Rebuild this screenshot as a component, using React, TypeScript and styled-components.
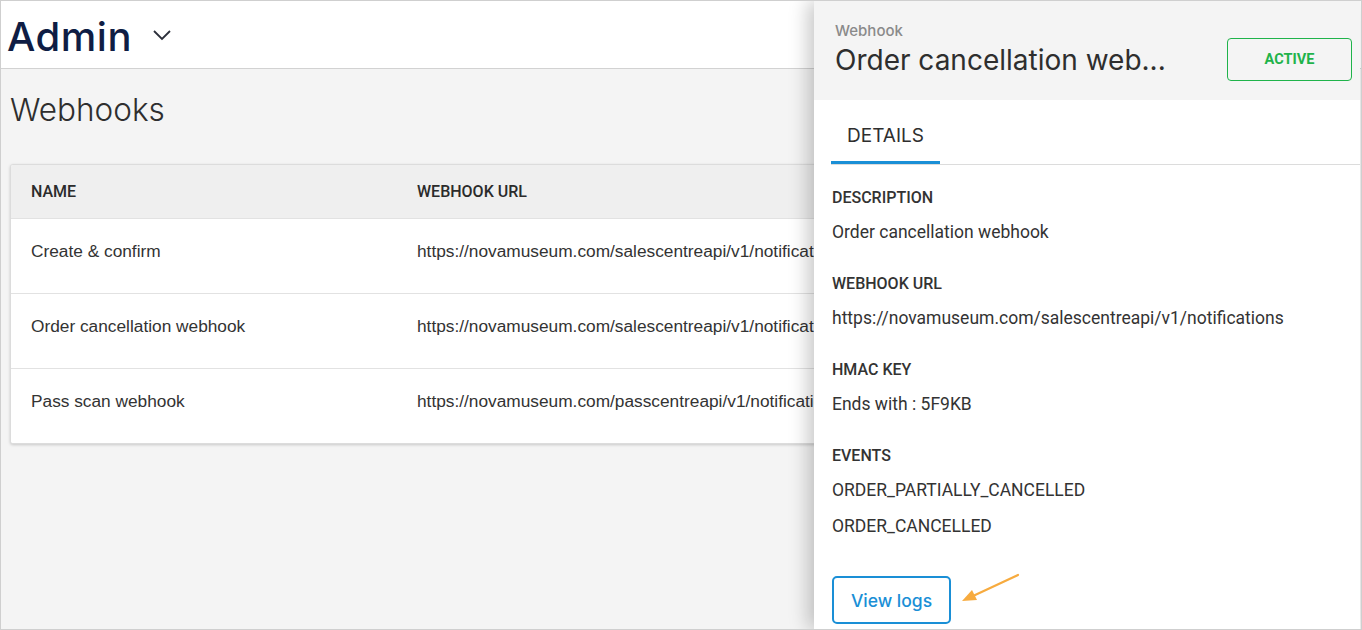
import React from "react";
import styled, { createGlobalStyle } from "styled-components";

const Global = createGlobalStyle`
  html, body { margin: 0; padding: 0; background: #fff; }
  body { font-family: "Liberation Sans", Arial, sans-serif; }
  * { box-sizing: border-box; }
`;

const Frame = styled.div`
  position: relative;
  width: 1362px;
  height: 630px;
  border: 1px solid #cfcfcf;
  background: #f4f4f4;
  overflow: hidden;
  display: flex;
  flex-direction: column;
`;

const TopBar = styled.header`
  height: 68px;
  flex: none;
  background: #fff;
  border-bottom: 1px solid #d2d2d2;
  display: flex;
  align-items: center;
  padding-left: 6px;
  gap: 20px;
`;

const Brand = styled.h1`
  margin: 0;
  font-family: Inter, "Noto Sans", sans-serif;
  font-weight: 500;
  font-size: 40px;
  letter-spacing: 0.5px;
  color: #0f1d44;
  line-height: 1;
  padding-top: 4px;
`;

const Main = styled.main`
  flex: 1;
  padding: 23px 0 0 9px;
  display: flex;
  flex-direction: column;
`;

const PageTitle = styled.h2`
  margin: 0 0 36px 0;
  font-family: Inter, "Noto Sans", sans-serif;
  font-weight: 300;
  font-size: 31.5px;
  line-height: 36px;
  color: #2e2e2e;
`;

const Card = styled.div`
  width: 1340px;
  background: #fff;
  border: 1px solid #dcdcdc;
  border-radius: 3px;
  box-shadow: 0 1px 3px rgba(0, 0, 0, 0.18);
  overflow: hidden;
`;

const Row = styled.div<{ $head?: boolean }>`
  display: grid;
  grid-template-columns: 386px 1fr;
  align-items: center;
  height: ${(p) => (p.$head ? "53px" : "75px")};
  background: ${(p) => (p.$head ? "#efefef" : "#fff")};
  border-top: ${(p) => (p.$head ? "none" : "1px solid #e2e2e2")};
  padding-left: 20px;
  padding-bottom: ${(p) => (p.$head ? "0" : "9px")};
`;

const HeadCell = styled.div`
  font-family: Roboto, sans-serif;
  font-weight: 500;
  font-size: 16px;
  color: #2b2b2b;
`;

const Cell = styled.div`
  font-family: "Liberation Sans", Arial, sans-serif;
  font-size: 17.3px;
  color: #333;
  white-space: nowrap;
`;

const Drawer = styled.aside`
  position: absolute;
  top: 0;
  right: 1px;
  bottom: 0;
  width: 546px;
  background: #fff;
  box-shadow: -6px 0 18px rgba(0, 0, 0, 0.22);
  display: flex;
  flex-direction: column;
`;

const DrawerHead = styled.div`
  height: 99px;
  flex: none;
  background: #f4f4f4;
  display: flex;
  justify-content: space-between;
  align-items: flex-start;
  padding: 21px 8px 0 21px;
`;

const Kicker = styled.div`
  font-family: Inter, "Noto Sans", sans-serif;
  font-weight: 500;
  font-size: 15px;
  line-height: 17px;
  color: #8a8a8a;
`;

const DrawerTitle = styled.div`
  font-family: Inter, "Noto Sans", sans-serif;
  font-weight: 400;
  font-size: 28px;
  line-height: 34px;
  margin-top: 4px;
  color: #2e2e2e;
  white-space: nowrap;
`;

const StatusBadge = styled.div`
  margin-top: 16px;
  width: 125px;
  height: 43px;
  border: 1px solid #1fb34a;
  border-radius: 4px;
  display: flex;
  align-items: center;
  justify-content: center;
  font-family: Roboto, sans-serif;
  font-weight: 700;
  font-size: 14.5px;
  color: #1fb34a;
`;

const Tabs = styled.nav`
  margin-left: 17px;
  height: 65px;
  flex: none;
  border-bottom: 1px solid #dcdcdc;
  display: flex;
`;

const Tab = styled.div<{ $active?: boolean }>`
  padding: 10px 16px 0;
  display: flex;
  align-items: center;
  font-family: Inter, "Noto Sans", sans-serif;
  font-size: 19px;
  font-weight: 400;
  color: #2e2e2e;
  border-bottom: 3px solid ${(p) => (p.$active ? "#1a8fd6" : "transparent")};
`;

const Body = styled.div`
  padding: 23px 0 0 18px;
  display: flex;
  flex-direction: column;
`;

const Section = styled.section`
  display: flex;
  flex-direction: column;
  gap: 12px;
  margin-bottom: 30px;
`;

const Label = styled.div`
  font-family: Roboto, sans-serif;
  font-weight: 500;
  font-size: 16px;
  line-height: 20px;
  color: #333;
`;

const Value = styled.div`
  font-family: Roboto, sans-serif;
  font-size: 17.5px;
  line-height: 24px;
  color: #333;
`;

const GhostButton = styled.button`
  margin-top: 8px;
  width: 119px;
  height: 48px;
  background: #fff;
  border: 2px solid #1a8fd6;
  border-radius: 5px;
  font-family: Inter, "Noto Sans", sans-serif;
  font-size: 17.5px;
  font-weight: 500;
  color: #1a8fd6;
  cursor: pointer;
  align-self: flex-start;
`;

const Annotation = styled.svg`
  position: absolute;
  left: 956px;
  top: 568px;
`;

const Chevron = () => (
  <svg width="20" height="12" viewBox="0 0 20 12" fill="none">
    <path d="M2 2 L10 10 L18 2" stroke="#2b2f3a" strokeWidth="1.8" />
  </svg>
);

const rows = [
  ["Create & confirm", "https://novamuseum.com/salescentreapi/v1/notifications"],
  ["Order cancellation webhook", "https://novamuseum.com/salescentreapi/v1/notifications"],
  ["Pass scan webhook", "https://novamuseum.com/passcentreapi/v1/notifications"],
];

export default function App() {
  return (
    <>
      <Global />
      <Frame>
        <TopBar>
          <Brand>Admin</Brand>
          <Chevron />
        </TopBar>
        <Main>
          <PageTitle>Webhooks</PageTitle>
          <Card>
            <Row $head>
              <HeadCell>NAME</HeadCell>
              <HeadCell>WEBHOOK URL</HeadCell>
            </Row>
            {rows.map(([n, u]) => (
              <Row key={n}>
                <Cell>{n}</Cell>
                <Cell>{u}</Cell>
              </Row>
            ))}
          </Card>
        </Main>
        <Drawer>
          <DrawerHead>
            <div>
              <Kicker>Webhook</Kicker>
              <DrawerTitle>Order cancellation web...</DrawerTitle>
            </div>
            <StatusBadge>ACTIVE</StatusBadge>
          </DrawerHead>
          <Tabs>
            <Tab $active>DETAILS</Tab>
          </Tabs>
          <Body>
            <Section>
              <Label>DESCRIPTION</Label>
              <Value>Order cancellation webhook</Value>
            </Section>
            <Section>
              <Label>WEBHOOK URL</Label>
              <Value>https://novamuseum.com/salescentreapi/v1/notifications</Value>
            </Section>
            <Section>
              <Label>HMAC KEY</Label>
              <Value>Ends with : 5F9KB</Value>
            </Section>
            <Section>
              <Label>EVENTS</Label>
              <Value>ORDER_PARTIALLY_CANCELLED</Value>
              <Value>ORDER_CANCELLED</Value>
            </Section>
            <GhostButton>View logs</GhostButton>
          </Body>
        </Drawer>
        <Annotation width="66" height="40" viewBox="0 0 66 40">
          <line x1="61" y1="6" x2="16" y2="27" stroke="#f7ab3f" strokeWidth="2.2" strokeLinecap="round" />
          <polygon points="5,32 15,21 20,31" fill="#f7ab3f" />
        </Annotation>
      </Frame>
    </>
  );
}
